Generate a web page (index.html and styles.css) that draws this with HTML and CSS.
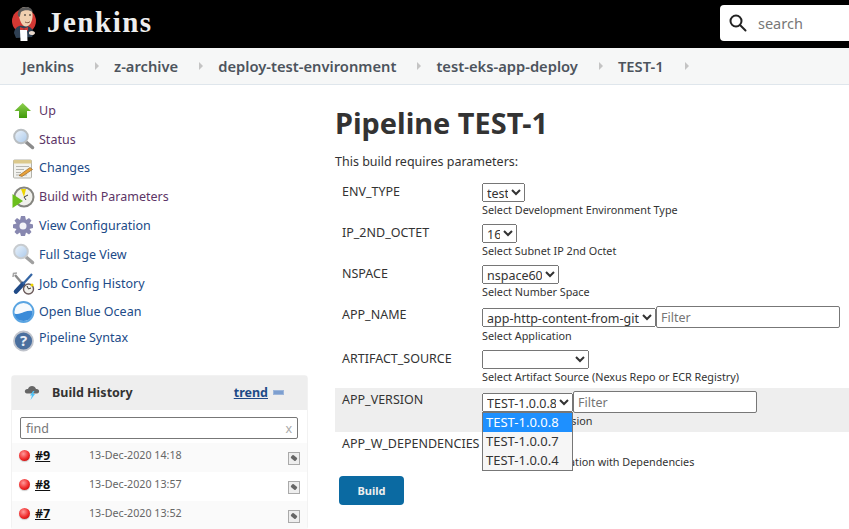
FILE: index.html
```html
<!DOCTYPE html>
<html lang="en">
<head>
  <meta charset="UTF-8" />
  <title>TEST-1 [Jenkins]</title>
  <link rel="stylesheet" href="styles.css">
</head>
<body>
  <header class="top-bar">
    <a class="logo">
      <svg class="logo-mark" width="28" height="36" viewBox="0 0 28 36">
        <circle cx="15" cy="15" r="12" fill="#d33833"/>
        <path d="M5 27 C6 21 10 19 14 20 C19 19 23 21 25 27 L23 31 L7 32 Z" fill="#2f4053"/>
        <path d="M9.500 7 C10 2 14 0.500 18 1 C22 2 24 6 23.500 11 C23 16 21 20 17 20.500 C13 20.500 10.500 15 9.500 7 Z" fill="#f0d0b0"/>
        <path d="M9 10 C8 4 12 0.500 18 1 C21 1.500 23 3 24 6 C20 3.500 15 3.500 12 6 C11.500 8 11 9 11 11 Z" fill="#5a5a5a"/>
        <path d="M15 9 H17 M20 9 H22" stroke="#222" stroke-width="1"/>
        <path d="M16 16 C18 17 20 17 21 15.500" stroke="#8a5a44" fill="none"/>
        <path d="M11 21 L15 22.500 L19 21 L19 25 L15 23.500 L11 25 Z" fill="#d33833"/>
        <path d="M11 24 H18 L18.500 35 H11.500 Z" fill="#fff"/>
        <path d="M20 26 C22 24 26 25 26 27 C26 29 22 30 20 28 Z" fill="#e8d8cc"/>
      </svg>
      <span class="logo-name">Jenkins</span>
    </a>
    <div class="search-box">
      <svg width="18" height="18" viewBox="0 0 18 18" fill="none" stroke="#222" stroke-width="2">
        <circle cx="7" cy="7" r="5.500"/>
        <path d="M11 11 L16.500 16.500" stroke-linecap="round"/>
      </svg>
      <span class="search-hint">search</span>
    </div>
  </header>

  <nav class="breadcrumbs">
    <a>Jenkins</a><i class="crumb-arrow"></i>
    <a>z-archive</a><i class="crumb-arrow"></i>
    <a>deploy-test-environment</a><i class="crumb-arrow"></i>
    <a>test-eks-app-deploy</a><i class="crumb-arrow"></i>
    <a>TEST-1</a><i class="crumb-arrow"></i>
  </nav>

  <div class="page">
    <aside class="side">
      <ul class="tasks">
        <li>
          <svg width="24" height="24" viewBox="0 0 24 24"><defs><linearGradient id="up" x1="0" y1="0" x2="0" y2="1"><stop offset="0" stop-color="#8fd04f"/><stop offset="1" stop-color="#3f9a0a"/></linearGradient><linearGradient id="lens" x1="0" y1="0" x2="1" y2="1"><stop offset="0" stop-color="#eef5fc"/><stop offset="1" stop-color="#a9c8ea"/></linearGradient></defs><path d="M11.700 5 L20 13 H16 V20 H8 V13 H3.500 Z" fill="url(#up)"/></svg>
          <a class="visited">Up</a>
        </li>
        <li>
          <svg width="24" height="24" viewBox="0 0 24 24"><path d="M15 15 L21.500 20.500" stroke="#8b8b8b" stroke-width="3.500" stroke-linecap="round"/><circle cx="10" cy="9.500" r="6.800" fill="url(#lens)" stroke="#b9bec2" stroke-width="2"/></svg>
          <a class="visited">Status</a>
        </li>
        <li>
          <svg width="24" height="24" viewBox="0 0 24 24"><rect x="2.500" y="4" width="18" height="18" rx="1" fill="#f2f2ee" stroke="#b3b3ab"/><rect x="2.500" y="4" width="18" height="3.500" fill="#dcc98c"/><path d="M5 10.500 H18 M5 13.500 H13 M5 16.500 H10 M5 19 H16" stroke="#b5b5b0"/><path d="M8 19.500 L19 11.500 L21.500 13.500 L11 20.500 Z" fill="#e9a23b" stroke="#8a5a1a" stroke-width=".6"/></svg>
          <a>Changes</a>
        </li>
        <li>
          <svg width="24" height="24" viewBox="0 0 24 24"><circle cx="13" cy="12" r="9.500" fill="#f1f1ec" stroke="#85857f" stroke-width="2"/><path d="M13 12 L10 4 L15 4 Z" fill="#edd400"/><path d="M13 12 L17 10 M13 12 L15 15" stroke="#444"/><path d="M1.500 9 L12 16 L1.500 23 Z" fill="#6cbf1d"/></svg>
          <a class="visited">Build with Parameters</a>
        </li>
        <li>
          <svg width="24" height="24" viewBox="0 0 24 24"><path d="M10 2 H14 L15 6 L18 4 L20.500 6.500 L18.500 9.500 L22 10.500 V14 L18.500 15 L20.500 18 L18 20.500 L15 18.500 L14 22 H10 L9 18.500 L6 20.500 L3.500 18 L5.500 15 L2 14 V10.500 L5.500 9.500 L3.500 6.500 L6 4 L9 6 Z" fill="#8888b0"/><circle cx="12" cy="12" r="3.500" fill="#f4f4f8"/></svg>
          <a>View Configuration</a>
        </li>
        <li>
          <svg width="24" height="24" viewBox="0 0 24 24"><path d="M15 15 L21.500 20.500" stroke="#a0a0a0" stroke-width="3.500" stroke-linecap="round"/><circle cx="10" cy="9.500" r="6.800" fill="url(#lens)" stroke="#c8ccd0" stroke-width="2"/></svg>
          <a>Full Stage View</a>
        </li>
        <li>
          <svg width="24" height="24" viewBox="0 0 24 24"><path d="M4 4 L16 18" stroke="#8a8a8a" stroke-width="2.400" fill="none"/><path d="M2 6 L2.500 2.500 L6 2" stroke="#a5a5a5" stroke-width="1.500" fill="none"/><path d="M5 20.500 L12 13" stroke="#204a87" stroke-width="4.500" stroke-linecap="round"/><path d="M12 13 L21 3" stroke="#3465a4" stroke-width="2.200"/><circle cx="17.500" cy="18" r="5" fill="#f2f2ee" stroke="#6b5a5a" stroke-width="1.400"/><path d="M17.500 18 L16 15 M17.500 18 L20 17" stroke="#333"/><circle cx="21" cy="14" r="1.500" fill="#edd400"/></svg>
          <a>Job Config History</a>
        </li>
        <li>
          <svg width="24" height="24" viewBox="0 0 24 24"><circle cx="12.500" cy="12" r="10" fill="#f6fafd" stroke="#5aa5e2" stroke-width="1.800"/><path d="M3.500 13.500 C7 15 10 13 13 12 C16 11 19 10.500 21.500 11 C22 17 18 21 12.500 21 C7 21 4 17.500 3.500 13.500 Z" fill="#3a8bd8"/></svg>
          <a>Open Blue Ocean</a>
        </li>
        <li class="task-last">
          <svg width="24" height="24" viewBox="0 0 24 24"><circle cx="12.500" cy="12" r="9.500" fill="#4a6f9e" stroke="#c0c4cc" stroke-width="1.800"/><text class="help-mark" x="12.500" y="17" text-anchor="middle">?</text></svg>
          <a>Pipeline Syntax</a>
        </li>
      </ul>

      <section class="history">
        <div class="history-head">
          <svg width="16" height="16" viewBox="0 0 16 16"><path d="M3 9.500 C0 9.500 0 4.500 4 5 C5 1 11 1 12 5 C16 4.500 16 9.500 13 9.500 Z" fill="#666"/><path d="M9 7 L6 11.500 H8 L6.500 16 L11 10 H9 L10.500 7 Z" fill="#4fc3f7"/></svg>
          <span class="history-title">Build History</span>
          <a class="trend">trend</a>
          <i class="collapse"></i>
        </div>
        <div class="history-find">
          <div class="find-box"><span>find</span><span class="find-x">x</span></div>
        </div>
        <div class="build-row">
          <i class="ball"></i><a class="build-no">#9</a><span class="build-date">13-Dec-2020 14:18</span><i class="console"></i>
        </div>
        <div class="build-row even">
          <i class="ball"></i><a class="build-no">#8</a><span class="build-date">13-Dec-2020 13:57</span><i class="console"></i>
        </div>
        <div class="build-row">
          <i class="ball"></i><a class="build-no">#7</a><span class="build-date">13-Dec-2020 13:52</span><i class="console"></i>
        </div>
      </section>
    </aside>

    <main class="main">
      <h1>Pipeline TEST-1</h1>
      <p class="intro">This build requires parameters:</p>

      <div class="param">
        <label>ENV_TYPE</label>
        <div class="param-value">
          <select class="sel-env"><option>test</option></select>
          <div class="param-desc">Select Development Environment Type</div>
        </div>
      </div>
      <div class="param">
        <label>IP_2ND_OCTET</label>
        <div class="param-value">
          <select class="sel-ip"><option>16</option></select>
          <div class="param-desc">Select Subnet IP 2nd Octet</div>
        </div>
      </div>
      <div class="param">
        <label>NSPACE</label>
        <div class="param-value">
          <select class="sel-space"><option>nspace60</option></select>
          <div class="param-desc">Select Number Space</div>
        </div>
      </div>
      <div class="param">
        <label>APP_NAME</label>
        <div class="param-value">
          <div class="filter-line">
            <select class="sel-app"><option>app-http-content-from-git</option></select>
            <input class="filter" placeholder="Filter">
          </div>
          <div class="param-desc">Select Application</div>
        </div>
      </div>
      <div class="param">
        <label>ARTIFACT_SOURCE</label>
        <div class="param-value">
          <select class="sel-artifact"><option></option></select>
          <div class="param-desc">Select Artifact Source (Nexus Repo or ECR Registry)</div>
        </div>
      </div>
      <div class="param param-open">
        <label>APP_VERSION</label>
        <div class="param-value">
          <div class="filter-line">
            <select class="sel-version"><option>TEST-1.0.0.8</option></select>
            <input class="filter" placeholder="Filter">
          </div>
          <div class="param-desc">Select Artifact Version</div>
          <ul class="dropdown">
            <li class="picked">TEST-1.0.0.8</li>
            <li>TEST-1.0.0.7</li>
            <li>TEST-1.0.0.4</li>
          </ul>
        </div>
      </div>
      <div class="param param-deps">
        <label>APP_W_DEPENDENCIES</label>
        <div class="param-value">
          <div class="check-line"></div>
          <div class="param-desc">Select Test Application with Dependencies</div>
        </div>
      </div>

      <button class="build-btn">Build</button>
    </main>
  </div>
</body>
</html>
```

FILE: styles.css
```css
* {
  box-sizing: border-box;
}
html, body {
  height: 529px;
  overflow: hidden;
}
body {
  margin: 0;
  font-family: "Noto Sans", sans-serif;
  font-size: 12.500px;
  color: #333;
  background: #fff;
}

.top-bar {
  height: 48px;
  background: #000;
  display: flex;
  justify-content: space-between;
  align-items: center;
  padding-left: 9px;
  overflow: hidden;
}
.logo {
  display: flex;
  align-items: center;
  gap: 10px;
}
.logo-name {
  padding-bottom: 3px;
  font-family: "Liberation Serif", serif;
  font-weight: bold;
  font-size: 29px;
  letter-spacing: 1.500px;
  color: #eee;
}
.search-box {
  flex: none;
  width: 129px;
  height: 36px;
  margin-top: -2px;
  background: #fff;
  border-radius: 4px 0 0 4px;
  display: flex;
  align-items: center;
  gap: 11px;
  padding-left: 9px;
}
.search-hint {
  font-size: 14.500px;
  color: #777;
}

.breadcrumbs {
  height: 37px;
  background: #f6f7f7;
  border-bottom: 1px solid #dfe6ec;
  display: flex;
  align-items: center;
  padding-left: 22px;
  font-size: 14.720px;
  font-weight: 600;
  color: #4d545d;
}
.crumb-arrow {
  width: 0;
  height: 0;
  margin: 0 15px 0 21px;
  border-left: 4px solid #c4c4c4;
  border-top: 4px solid transparent;
  border-bottom: 4px solid transparent;
}

.page {
  display: flex;
}
.side {
  flex: none;
  width: 335px;
  padding: 11px 27px 0 11px;
}
.tasks {
  list-style: none;
  margin: 0;
  padding: 0;
}
.tasks li {
  height: 28.800px;
  display: flex;
  align-items: center;
  gap: 4px;
  color: #204a87;
}
.tasks a.visited {
  color: #5c3566;
}
.tasks .task-last a {
  padding-bottom: 6px;
}

.history {
  margin-top: 20px;
  border-radius: 4px;
  border: 1px solid #f2f2f2;
  border-bottom: none;
}
.history-head {
  height: 34px;
  background: #eee;
  display: flex;
  align-items: center;
  padding: 0 23px 2px 12px;
}
.history-title {
  margin-left: 12px;
  font-weight: 700;
  flex: 1;
}
.trend {
  font-weight: 700;
  color: #204a87;
  text-decoration: underline;
}
.collapse {
  width: 11px;
  height: 5px;
  margin-left: 5px;
  background: #7d9fd0;
  border: 1px solid #9db6da;
}
.history-find {
  padding: 7px 9px 4px 8px;
}
.find-box {
  height: 22px;
  border: 1px solid #777;
  border-radius: 2px;
  display: flex;
  justify-content: space-between;
  align-items: center;
  padding: 0 5px;
  color: #777;
}
.find-x {
  color: #aaa;
}
.build-row {
  height: 29px;
  display: flex;
  align-items: center;
  padding: 0 7px 5px;
  background: #fafafa;
}
.build-row.even {
  background: #fff;
}
.ball {
  width: 11px;
  height: 11px;
  border-radius: 50%;
  background: radial-gradient(circle at 40% 35%, #ff9a9a, #ef2929 55%, #a40000);
  margin: 1px 5px 0 0;
  box-shadow: 0 1px 1px #ccc;
}
.build-no {
  width: 54px;
  font-weight: 700;
  color: #111;
  text-decoration: underline;
}
.build-date {
  font-size: 10.700px;
  color: #666;
  flex: 1;
}
.console {
  position: relative;
  top: 3px;
  width: 12px;
  height: 13px;
  background: #eee;
  border: 1px solid #aaa;
}
.console::after {
  content: "";
  position: absolute;
  left: 2px;
  top: 3px;
  width: 6px;
  height: 4px;
  background: #666;
  transform: rotate(40deg);
  border-radius: 1px;
}

.main {
  flex: 1;
  min-width: 0;
}
h1 {
  margin: 17px 0 0;
  font-size: 28.900px;
  line-height: 42px;
  font-weight: 700;
}
.intro {
  margin: 9px 0 8px;
  line-height: 18px;
}
.param {
  display: flex;
  padding: 3px 7px 3px;
}
.param label {
  flex: none;
  width: 140px;
  padding-top: 1px;
  line-height: 18px;
}
.param-value {
  position: relative;
  flex: 1;
  padding-top: 1px;
}
select {
  display: block;
  font: 12.500px "Noto Sans", sans-serif;
  color: #333;
  height: 19px;
  padding: 0;
}
.sel-env {
  width: 43px;
}
.sel-ip {
  width: 35px;
}
.sel-space {
  width: 77px;
}
.sel-app {
  width: 174px;
}
.sel-artifact {
  width: 107px;
}
.sel-version {
  width: 91px;
}
.filter-line {
  display: flex;
  align-items: center;
  height: 22px;
}
.filter {
  font: 12.500px "Noto Sans", sans-serif;
  height: 22px;
  width: 184px;
  padding: 1px 4px;
  border: 1px solid #777;
  border-radius: 2px;
}
.param-desc {
  font-size: 10.800px;
  line-height: 15px;
}
.param-open {
  margin-top: 1px;
  padding-bottom: 4px;
  background: #eee;
}
.param-open label {
  padding-top: 0;
}
.param-open .param-value {
  padding-top: 0;
}
.param-deps {
  padding-top: 2px;
}
.check-line {
  height: 19px;
}
.dropdown {
  position: absolute;
  z-index: 1;
  left: 0;
  top: 21px;
  width: 91px;
  margin: 0;
  padding: 0;
  list-style: none;
  font-size: 13px;
  background: #f6f6f6;
  border: 1px solid #777;
}
.dropdown li {
  height: 19px;
  line-height: 19px;
  padding-left: 3px;
}
.dropdown .picked {
  background: #1e90ff;
  color: #fff;
}
.build-btn {
  display: block;
  width: 65px;
  height: 29px;
  margin: 4px 0 0 4px;
  background: #0b6aa2;
  color: #eee;
  border: none;
  border-radius: 4px;
  font: 700 11px "Noto Sans", sans-serif;
}
.help-mark {
  font: 700 15px "Noto Sans", sans-serif;
  fill: #e8eef6;
}
```
